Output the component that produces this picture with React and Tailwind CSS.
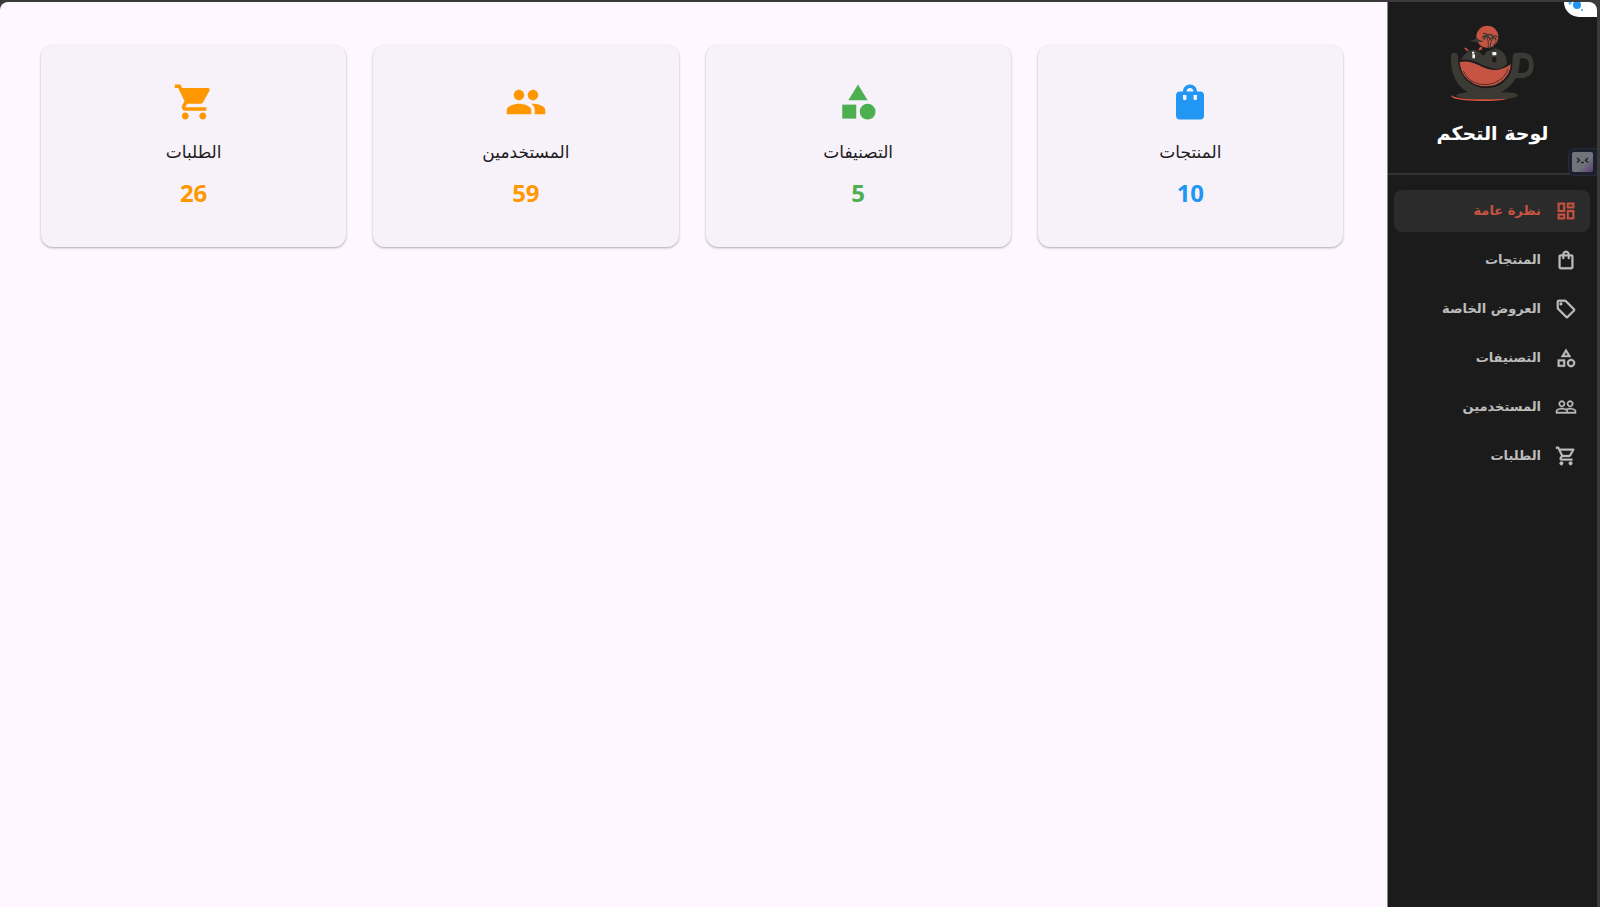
import { useState } from 'react';
import {
  MdCategory,
  MdOutlineCategory,
  MdOutlineDashboard,
  MdOutlineLocalOffer,
  MdOutlineShoppingBag,
  MdOutlineShoppingCart,
  MdPeople,
  MdPeopleOutline,
  MdShoppingBag,
  MdShoppingCart,
} from 'react-icons/md';

const navItems = [
  { id: 'overview', label: 'نظرة عامة', icon: MdOutlineDashboard },
  { id: 'products', label: 'المنتجات', icon: MdOutlineShoppingBag },
  { id: 'offers', label: 'العروض الخاصة', icon: MdOutlineLocalOffer },
  { id: 'categories', label: 'التصنيفات', icon: MdOutlineCategory },
  { id: 'users', label: 'المستخدمين', icon: MdPeopleOutline },
  { id: 'orders', label: 'الطلبات', icon: MdOutlineShoppingCart },
];

const stats = [
  { label: 'المنتجات', value: 10, icon: MdShoppingBag, color: 'text-[#2196f3]' },
  { label: 'التصنيفات', value: 5, icon: MdCategory, color: 'text-[#4caf50]' },
  { label: 'المستخدمين', value: 59, icon: MdPeople, color: 'text-[#ff9800]' },
  { label: 'الطلبات', value: 26, icon: MdShoppingCart, color: 'text-[#ff9800]' },
];

function Logo() {
  return (
    <svg viewBox="8 0 360 285" className="h-[95px] w-[120px]" aria-hidden="true">
      {/* sun and palms */}
      <circle cx="171" cy="65" r="33" fill="#c65443" />
      <g stroke="#3b3a34" fill="none" strokeLinecap="round">
        <path d="M170 66q6 14 4 32M187 70q-8 12-8 30M196 82q-8 8-9 18" strokeWidth="3" />
        <path d="M170 64q-8-5-14 4M170 64q-8 2-9 10M170 64q2-9-10-9M170 64q5-9 12-4M170 64q8 0 8 8" strokeWidth="4" />
        <path d="M188 68q-7-2-9 7M188 68q0-9-7-9M188 68q6-9 12-3M188 68q9 0 9 8" strokeWidth="4" />
      </g>
      <path d="M116 79q14-1 24-11 5 7 14 9l5 4q-20 1-43-2z" fill="#3b3a34" />
      {/* sparks */}
      <path d="M105 100l7 6M147 104l6-5" stroke="#c65443" strokeWidth="5" strokeLinecap="round" />
      <circle cx="151" cy="101" r="4" fill="#c65443" />
      {/* ice cubes */}
      <path d="M92 134q8-16 20-24l14-6q16 0 26 12l8 6q8-16 26-18l10-4 14 6q20 12 20 40l-6 6q-14 12-34 9l-36-12q-30-17-62-15z" fill="#3b3a34" />
      <path d="M125 110h7v6h-7zM126 118h8v12h-8z" fill="#f4f4ee" />
      <path d="M186 111h12v10h-12z" fill="#f4f4ee" />
      <path d="M186 127h12v15h-12z" fill="#1b1b1b" />
      {/* cup body, handle and saucer */}
      <path d="M62 121q2-8 11-8 9 1 10 10-1 33 12 54 22 40 72 43 50-2 71-41 10-18 9-56 2-10 13-10h23q27 3 27 36 0 36-34 41l-19-1q-11 20-31 34l-14 9q47-1 51 8-2 14-94 14-77 0-92-12 2-7 36-11-16-7-28-22-24-32-23-78z" fill="#3b3a34" />
      <path d="M269 130h12q15 2 15 19 0 22-19 25h-13q3-20 5-44z" fill="#1b1b1b" />
      {/* liquid */}
      <path d="M88 141q28-6 58 10 40 22 69 10 13-4 27-13-3 27-21 45-21 21-54 21-42-1-65-32-12-17-14-41z" fill="#c65443" />
      <path d="M99 168q15 33 48 39 30 6 55-8" fill="none" stroke="#1b1b1b" strokeWidth="2" />
      <path d="M200 199q24-10 33-37" fill="none" stroke="#1b1b1b" strokeWidth="2" />
      <path d="M63 240q2 5 20 8 30 8 151 3-30 8-89 7-65-1-80-11-4-4-2-7z" fill="#d4523f" />
    </svg>
  );
}

function StatCard({ label, value, icon: Icon, color }) {
  return (
    <article className="flex flex-col items-center rounded-xl bg-[#f7f2fa] py-9 shadow-[0_1px_3px_rgba(0,0,0,0.15),0_1px_2px_rgba(0,0,0,0.2)]">
      <Icon size={42} className={color} />
      <h2 className="mt-[15px] text-[17px] leading-7 text-[#1d1b20]">{label}</h2>
      <p className={`mt-[9px] font-[Noto_Sans] text-2xl leading-9 font-bold ${color}`}>{value}</p>
    </article>
  );
}

export default function App() {
  const [active, setActive] = useState('overview');

  return (
    <div dir="rtl" className="flex min-h-screen border-t-2 border-r-3 border-[#3a3a3a] bg-[#3a3a3a] font-['DejaVu_Sans',sans-serif]">
      {/* SIDEBAR */}
      <aside className="relative w-[210px] shrink-0 overflow-hidden rounded-tr-lg border-l border-[#8a8789] bg-[#1b1b1b]">
        <header className="flex flex-col items-center border-b-2 border-[#333333] pt-[13px] pb-6">
          <Logo />
          <h1 className="mt-[7px] text-[19px] leading-8 font-bold text-white">لوحة التحكم</h1>
        </header>

        <nav className="flex flex-col gap-[7px] pt-[15px] pr-[7px] pl-[6px]">
          {navItems.map(({ id, label, icon: Icon }) => (
            <button
              key={id}
              onClick={() => setActive(id)}
              className={`flex h-[42px] items-center gap-[14px] rounded-lg px-[13px] text-[13px] font-bold ${active === id ? 'bg-[#2b2b2b] text-[#c65443]' : 'text-[#bdbdbd]'}`}
            >
              <Icon size={22} strokeWidth={0.4} className="[&>path[fill=none]]:stroke-none" />
              {label}
            </button>
          ))}
        </nav>

        {/* floating widgets */}
        <div className="absolute top-0 right-0 h-[15px] w-[33px] overflow-hidden rounded-bl-2xl bg-white">
          <svg viewBox="0 0 33 15" className="h-full w-full" aria-hidden="true">
            <circle cx="13" cy="3" r="4" fill="#2196f3" />
            <circle cx="6" cy="1" r="1.5" fill="#42b4f5" />
            <circle cx="18" cy="8" r="1.1" fill="#42b4f5" />
          </svg>
        </div>
        <div className="absolute top-[146px] right-0 h-7 w-[29px] rounded-l-md border border-r-0 border-[#252a3b] bg-[#1c1f2c] py-[3px] pr-1">
          <svg viewBox="0 0 21 20" className="h-5 w-[21px]" aria-hidden="true">
            <defs>
              <linearGradient id="face" x1="0" y1="0" x2="1" y2="1">
                <stop offset="0.6" stopColor="#70737a" />
                <stop offset="1" stopColor="#5b3a78" />
              </linearGradient>
            </defs>
            <rect width="21" height="20" rx="2" fill="url(#face)" />
            <path d="M5 6l2.500 2.200L5 10.500M16 6l-2.500 2.200 2.500 2.300M9 10.500h3" fill="none" stroke="#22252e" strokeWidth="1.500" />
          </svg>
        </div>
      </aside>

      {/* MAIN CONTENT */}
      <main className="flex-1 rounded-tl-lg bg-[#fef7ff] pt-[43px] pr-[44px] pl-[41px]">
        <div className="grid grid-cols-4 gap-[27px]">
          {stats.map((stat) => <StatCard key={stat.label} {...stat} />)}
        </div>
      </main>
    </div>
  );
}
